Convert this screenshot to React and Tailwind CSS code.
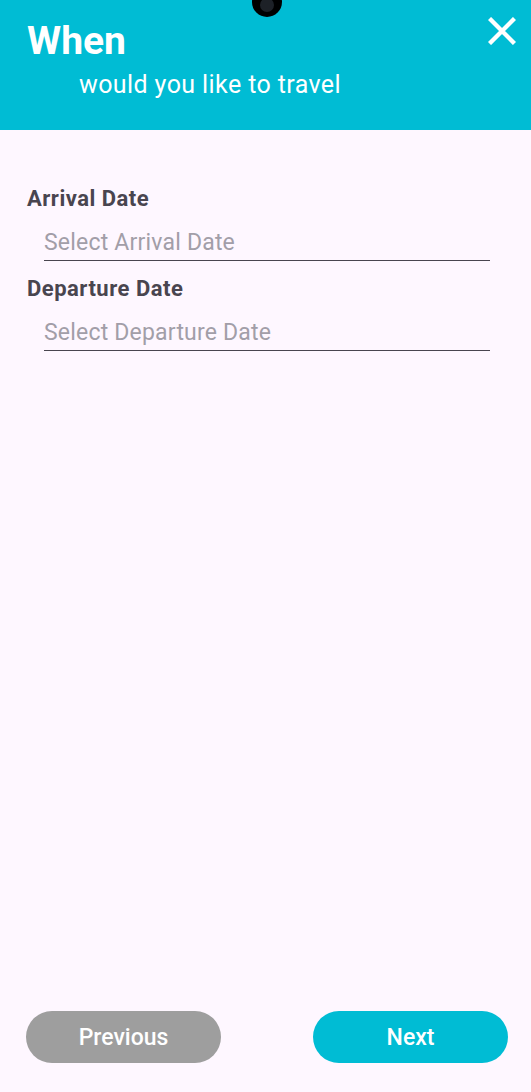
import React from 'react';

const font = { fontFamily: 'Roboto, "Liberation Sans", sans-serif' };

const DateField = ({ label, placeholder }) => (
  <div className="flex flex-col">
    <div className="text-[22px] leading-[26px] font-bold tracking-[0.5px] text-[#49454f]">{label}</div>
    <div className="ml-[17px] mr-[14px] pt-[17px] pb-[4px] border-b border-[#49454f]">
      <span className="block text-[23px] leading-[27px] tracking-[0.2px] text-[#a29ea8]">{placeholder}</span>
    </div>
  </div>
);

const App = () => {
  return (
    <div className="relative flex flex-col h-[1092px] bg-[#fef7ff] overflow-hidden" style={font}>
      {/* camera cutout */}
      <div className="absolute left-[252px] top-[-13px] w-[30px] h-[30px] rounded-full bg-black flex items-center justify-center">
        <div className="w-[14px] h-[14px] rounded-full bg-[#1d2127] mt-[6px]" />
      </div>

      <div className="h-[130px] bg-[#00bcd4] flex justify-between px-[27px] pt-[18px] shrink-0">
        <div className="flex flex-col">
          <h1 className="text-[39px] leading-[47px] font-bold text-white">When</h1>
          <p className="ml-[52px] mt-[5px] text-[25px] leading-[30px] tracking-[0.4px] text-white">would you like to travel</p>
        </div>
        <button className="-mr-[20px] w-[44px] h-[44px] -mt-[9px] flex items-center justify-center">
          <svg width="28" height="28" viewBox="0 0 28 28">
            <path d="M1.5 1.5 L26.5 26.5 M26.5 1.5 L1.5 26.5" stroke="white" strokeWidth="4.4" />
          </svg>
        </button>
      </div>

      <div className="flex-1 flex flex-col gap-[15px] px-[27px] pt-[56px]">
        <DateField label="Arrival Date" placeholder="Select Arrival Date" />
        <DateField label="Departure Date" placeholder="Select Departure Date" />
      </div>

      <div className="flex justify-between px-[26px] pb-[29px] shrink-0">
        <button className="w-[195px] h-[52px] pt-[3px] rounded-full bg-[#9e9e9e] text-white text-[23px] font-medium">
          Previous
        </button>
        <button className="w-[195px] h-[52px] pt-[3px] rounded-full bg-[#00bcd4] text-white text-[23px] font-medium -mr-[3px]">
          Next
        </button>
      </div>
    </div>
  );
};

export default App;
